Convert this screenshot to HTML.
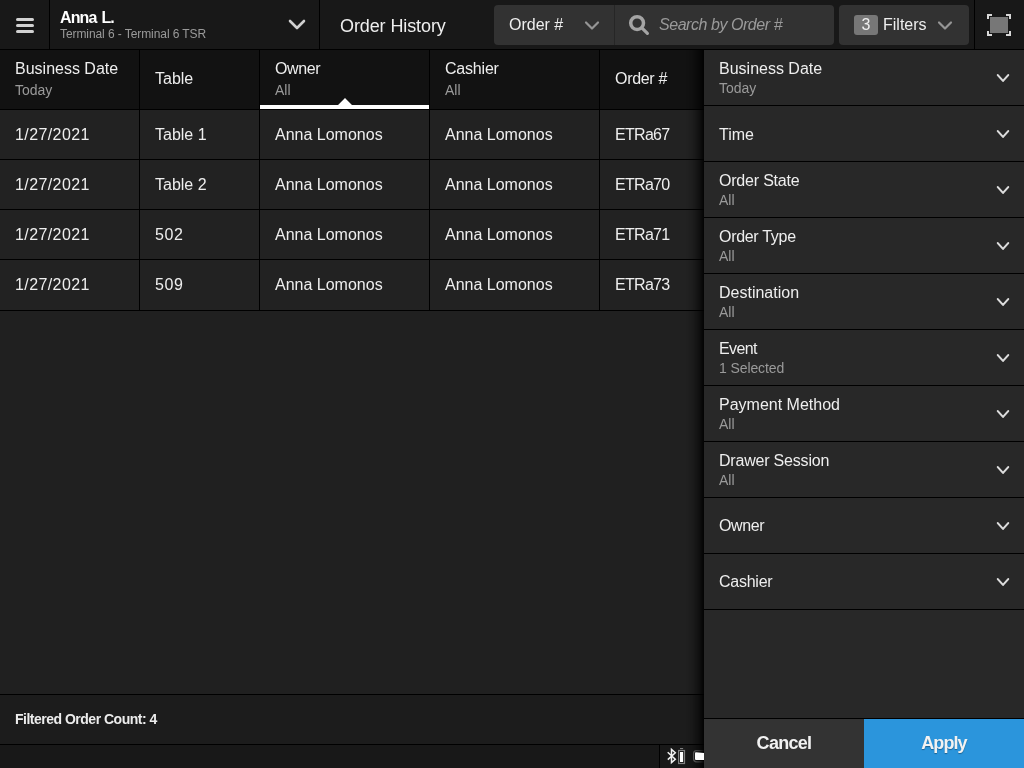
<!DOCTYPE html>
<html><head><meta charset="utf-8">
<style>
*{box-sizing:border-box;margin:0;padding:0}
html,body{width:1024px;height:768px;overflow:hidden;background:#202020}
body{position:relative;font-family:"Liberation Sans",sans-serif;color:#eeeeee}
.a{position:absolute}
.t{position:absolute;white-space:nowrap;line-height:20px;will-change:transform}
.f16{font-size:16px}
.f14{font-size:14px}
.sub{color:#9a9a9a}
/* top bar */
#top{left:0;top:0;width:1024px;height:50px;background:#181818;border-bottom:1px solid #000}
.vl{position:absolute;width:1px;background:#000}
.hl{position:absolute;height:1px;background:#000}
#hdr{left:0;top:50px;width:704px;height:60px;background:#121212}
.row{position:absolute;left:0;width:704px;height:50px;background:#222222}
#empty{left:0;top:311px;width:704px;height:384px;background:#202020}
#footer{left:0;top:695px;width:704px;height:50px;background:#1c1c1c}
#status{left:0;top:745px;width:704px;height:23px;background:#181818}
#panel{left:704px;top:50px;width:320px;height:718px;background:#282828}
#shadow{left:686px;top:50px;width:18px;height:718px;background:linear-gradient(to right,rgba(0,0,0,0) 0%,rgba(0,0,0,.12) 35%,rgba(0,0,0,.45) 70%,rgba(0,0,0,.92) 100%)}
.item{position:absolute;left:0;width:320px;height:56px;border-bottom:1px solid #111}
</style></head><body>

<!-- TOP BAR -->
<div id="top" class="a"></div>
<div class="vl" style="left:49px;top:0;height:49px"></div>
<div class="vl" style="left:319px;top:0;height:49px"></div>
<div class="vl" style="left:974px;top:0;height:49px"></div>
<!-- hamburger -->
<svg class="a" style="left:15px;top:17px" width="20" height="16" viewBox="0 0 20 16">
<g stroke="#d2d2d2" stroke-width="3" stroke-linecap="round"><line x1="2.5" y1="2.5" x2="17.5" y2="2.5"/><line x1="2.5" y1="8.5" x2="17.5" y2="8.5"/><line x1="2.5" y1="14.5" x2="17.5" y2="14.5"/></g></svg>
<div class="t" style="left:60px;top:8px;font-size:16px;font-weight:700;color:#fff;letter-spacing:-0.9px;word-spacing:1.5px">Anna L.</div>
<div class="t" style="left:60px;top:24px;font-size:12px;color:#9a9a9a;letter-spacing:-0.08px">Terminal 6 - Terminal 6 TSR</div>
<svg class="a" style="left:288px;top:18px" width="18" height="14" viewBox="0 0 18 14"><polyline points="2,3 9,10 16,3" fill="none" stroke="#d0d0d0" stroke-width="2.6" stroke-linecap="round" stroke-linejoin="round"/></svg>
<div class="t" style="left:340px;top:16px;font-size:18px;color:#eee;letter-spacing:-0.1px">Order History</div>
<!-- search group -->
<div class="a" style="left:494px;top:5px;width:340px;height:40px;background:#323232;border-radius:4px"></div>
<div class="vl" style="left:614px;top:5px;height:40px;background:#262626"></div>
<div class="t f16" style="left:509px;top:14.5px;color:#eee">Order #</div>
<svg class="a" style="left:584px;top:19.5px" width="16" height="12" viewBox="0 0 16 12"><polyline points="2,2.5 8,8.5 14,2.5" fill="none" stroke="#959595" stroke-width="2.2" stroke-linecap="round" stroke-linejoin="round"/></svg>
<svg class="a" style="left:627px;top:13px" width="24" height="24" viewBox="0 0 24 24"><circle cx="10.1" cy="10.1" r="6.4" fill="none" stroke="#a4a4a4" stroke-width="3.5"/><line x1="14.8" y1="14.8" x2="20.4" y2="20.4" stroke="#a4a4a4" stroke-width="3.2" stroke-linecap="round"/></svg>
<div class="t f16" style="left:659px;top:15px;color:#9a9a9a;font-style:italic;letter-spacing:-0.45px">Search by Order #</div>
<!-- filters btn -->
<div class="a" style="left:839px;top:5px;width:130px;height:40px;background:#323232;border-radius:4px"></div>
<div class="a" style="left:854px;top:15px;width:24px;height:20px;background:#777;border-radius:3px"></div>
<div class="t f16" style="left:857px;top:15px;width:18px;text-align:center;color:#eee">3</div>
<div class="t f16" style="left:883px;top:14.5px;color:#eee">Filters</div>
<svg class="a" style="left:937px;top:19.5px" width="16" height="12" viewBox="0 0 16 12"><polyline points="2,2.5 8,8.5 14,2.5" fill="none" stroke="#959595" stroke-width="2.2" stroke-linecap="round" stroke-linejoin="round"/></svg>
<!-- fullscreen icon -->
<svg class="a" style="left:987px;top:14px" width="24" height="22" viewBox="0 0 24 22">
<rect x="3" y="3" width="18" height="16" fill="#777"/>
<g fill="#d8d8d8"><path d="M0,0H5V2H2V5H0Z"/><path d="M24,0H19V2H22V5H24Z"/><path d="M0,22H5V20H2V17H0Z"/><path d="M24,22H19V20H22V17H24Z"/></g></svg>

<!-- TABLE HEADER -->
<div id="hdr" class="a"></div>
<div class="hl" style="left:0;top:109px;width:704px"></div>
<div class="vl" style="left:139px;top:50px;height:261px"></div>
<div class="vl" style="left:259px;top:50px;height:261px"></div>
<div class="vl" style="left:429px;top:50px;height:261px"></div>
<div class="vl" style="left:599px;top:50px;height:261px"></div>
<div class="t f16" style="left:15px;top:59px">Business Date</div>
<div class="t f14 sub" style="left:15px;top:80px">Today</div>
<div class="t f16" style="left:155px;top:69px">Table</div>
<div class="t f16" style="left:275px;top:59px;letter-spacing:-0.4px">Owner</div>
<div class="t f14 sub" style="left:275px;top:80px">All</div>
<div class="t f16" style="left:445px;top:59px;letter-spacing:-0.2px">Cashier</div>
<div class="t f14 sub" style="left:445px;top:80px">All</div>
<div class="t f16" style="left:615px;top:69px;letter-spacing:-0.3px">Order #</div>
<svg class="a" style="left:260px;top:97px" width="169" height="12" viewBox="0 0 169 12"><path d="M0,8 L78,8 L85,1 L92,8 L169,8 L169,12 L0,12 Z" fill="#fff"/></svg>

<!-- ROWS -->
<div class="row" style="top:110px"></div>
<div class="row" style="top:160px"></div>
<div class="row" style="top:210px"></div>
<div class="row" style="top:260px"></div>
<div class="hl" style="left:0;top:159px;width:704px"></div>
<div class="hl" style="left:0;top:209px;width:704px"></div>
<div class="hl" style="left:0;top:259px;width:704px"></div>
<div class="hl" style="left:0;top:310px;width:704px"></div>
<div class="vl" style="left:139px;top:110px;height:200px"></div>
<div class="vl" style="left:259px;top:110px;height:200px"></div>
<div class="vl" style="left:429px;top:110px;height:200px"></div>
<div class="vl" style="left:599px;top:110px;height:200px"></div>

<div class="t f16" style="left:15px;top:125px;letter-spacing:0.4px">1/27/2021</div>
<div class="t f16" style="left:155px;top:125px">Table 1</div>
<div class="t f16" style="left:275px;top:125px">Anna Lomonos</div>
<div class="t f16" style="left:445px;top:125px">Anna Lomonos</div>
<div class="t f16" style="left:615px;top:125px;letter-spacing:-0.7px">ETRa67</div>

<div class="t f16" style="left:15px;top:175px;letter-spacing:0.4px">1/27/2021</div>
<div class="t f16" style="left:155px;top:175px">Table 2</div>
<div class="t f16" style="left:275px;top:175px">Anna Lomonos</div>
<div class="t f16" style="left:445px;top:175px">Anna Lomonos</div>
<div class="t f16" style="left:615px;top:175px;letter-spacing:-0.7px">ETRa70</div>

<div class="t f16" style="left:15px;top:225px;letter-spacing:0.4px">1/27/2021</div>
<div class="t f16" style="left:155px;top:225px;letter-spacing:0.6px">502</div>
<div class="t f16" style="left:275px;top:225px">Anna Lomonos</div>
<div class="t f16" style="left:445px;top:225px">Anna Lomonos</div>
<div class="t f16" style="left:615px;top:225px;letter-spacing:-0.7px">ETRa71</div>

<div class="t f16" style="left:15px;top:275px;letter-spacing:0.4px">1/27/2021</div>
<div class="t f16" style="left:155px;top:275px;letter-spacing:0.6px">509</div>
<div class="t f16" style="left:275px;top:275px">Anna Lomonos</div>
<div class="t f16" style="left:445px;top:275px">Anna Lomonos</div>
<div class="t f16" style="left:615px;top:275px;letter-spacing:-0.7px">ETRa73</div>

<div id="empty" class="a"></div>
<div class="hl" style="left:0;top:694px;width:704px"></div>
<div id="footer" class="a"></div>
<div class="t" style="left:15px;top:709px;font-size:14px;font-weight:700;color:#ececec;letter-spacing:-0.5px">Filtered Order Count: 4</div>
<div class="hl" style="left:0;top:744px;width:704px"></div>
<div id="status" class="a"></div>
<div class="vl" style="left:659px;top:745px;height:23px"></div>


<!-- PANEL -->
<svg class="a" style="left:690px;top:748px" width="14" height="16" viewBox="690 748 14 16"><rect x="693.6" y="750.6" width="22" height="11.2" rx="3" fill="none" stroke="#6a6a6a" stroke-width="1.3"/></svg>
<div id="shadow" class="a"></div>
<svg class="a" style="left:660px;top:745px" width="44" height="23" viewBox="660 745 44 23">
<polyline points="667.7,752.3 675.3,759.2 671.5,762.6 671.5,749.4 675.3,752.8 667.8,759.6" fill="none" stroke="#f2f2f2" stroke-width="1.5" stroke-linejoin="miter" stroke-miterlimit="3"/>
<rect x="678.6" y="750.5" width="5.9" height="13" fill="none" stroke="#808080" stroke-width="1.2"/>
<rect x="680" y="752" width="3.1" height="10" fill="#fff"/>
<rect x="680" y="748" width="3.1" height="1.1" fill="#808080"/>
<path d="M695,753.2 Q695,752.3 696,752.3 L704,753 L704,759.9 L696,759.9 Q695,759.9 695,758.9 Z" fill="#fff"/>
</svg>
<div id="panel" class="a"></div>
<div class="hl" style="left:704px;top:105px;width:320px"></div>
<div class="t f16" style="left:719px;top:59px">Business Date</div>
<div class="t f14 sub" style="left:719px;top:78px">Today</div>
<svg class="a" style="left:995px;top:72px" width="16" height="14" viewBox="0 0 16 14"><polyline points="2.8,3.1 8,8.9 13.2,3.1" fill="none" stroke="#dcdcdc" stroke-width="2.1" stroke-linecap="round" stroke-linejoin="round"/></svg>
<div class="hl" style="left:704px;top:161px;width:320px"></div>
<div class="t f16" style="left:719px;top:125px">Time</div>
<svg class="a" style="left:995px;top:128px" width="16" height="14" viewBox="0 0 16 14"><polyline points="2.8,3.1 8,8.9 13.2,3.1" fill="none" stroke="#dcdcdc" stroke-width="2.1" stroke-linecap="round" stroke-linejoin="round"/></svg>
<div class="hl" style="left:704px;top:217px;width:320px"></div>
<div class="t f16" style="left:719px;top:171px;letter-spacing:-0.2px">Order State</div>
<div class="t f14 sub" style="left:719px;top:190px">All</div>
<svg class="a" style="left:995px;top:184px" width="16" height="14" viewBox="0 0 16 14"><polyline points="2.8,3.1 8,8.9 13.2,3.1" fill="none" stroke="#dcdcdc" stroke-width="2.1" stroke-linecap="round" stroke-linejoin="round"/></svg>
<div class="hl" style="left:704px;top:273px;width:320px"></div>
<div class="t f16" style="left:719px;top:227px;letter-spacing:-0.3px">Order Type</div>
<div class="t f14 sub" style="left:719px;top:246px">All</div>
<svg class="a" style="left:995px;top:240px" width="16" height="14" viewBox="0 0 16 14"><polyline points="2.8,3.1 8,8.9 13.2,3.1" fill="none" stroke="#dcdcdc" stroke-width="2.1" stroke-linecap="round" stroke-linejoin="round"/></svg>
<div class="hl" style="left:704px;top:329px;width:320px"></div>
<div class="t f16" style="left:719px;top:283px">Destination</div>
<div class="t f14 sub" style="left:719px;top:302px">All</div>
<svg class="a" style="left:995px;top:296px" width="16" height="14" viewBox="0 0 16 14"><polyline points="2.8,3.1 8,8.9 13.2,3.1" fill="none" stroke="#dcdcdc" stroke-width="2.1" stroke-linecap="round" stroke-linejoin="round"/></svg>
<div class="hl" style="left:704px;top:385px;width:320px"></div>
<div class="t f16" style="left:719px;top:339px;letter-spacing:-0.6px">Event</div>
<div class="t f14 sub" style="left:719px;top:358px;letter-spacing:-0.1px">1 Selected</div>
<svg class="a" style="left:995px;top:352px" width="16" height="14" viewBox="0 0 16 14"><polyline points="2.8,3.1 8,8.9 13.2,3.1" fill="none" stroke="#dcdcdc" stroke-width="2.1" stroke-linecap="round" stroke-linejoin="round"/></svg>
<div class="hl" style="left:704px;top:441px;width:320px"></div>
<div class="t f16" style="left:719px;top:395px">Payment Method</div>
<div class="t f14 sub" style="left:719px;top:414px">All</div>
<svg class="a" style="left:995px;top:408px" width="16" height="14" viewBox="0 0 16 14"><polyline points="2.8,3.1 8,8.9 13.2,3.1" fill="none" stroke="#dcdcdc" stroke-width="2.1" stroke-linecap="round" stroke-linejoin="round"/></svg>
<div class="hl" style="left:704px;top:497px;width:320px"></div>
<div class="t f16" style="left:719px;top:451px;letter-spacing:-0.2px">Drawer Session</div>
<div class="t f14 sub" style="left:719px;top:470px">All</div>
<svg class="a" style="left:995px;top:464px" width="16" height="14" viewBox="0 0 16 14"><polyline points="2.8,3.1 8,8.9 13.2,3.1" fill="none" stroke="#dcdcdc" stroke-width="2.1" stroke-linecap="round" stroke-linejoin="round"/></svg>
<div class="hl" style="left:704px;top:553px;width:320px"></div>
<div class="t f16" style="left:719px;top:516px;letter-spacing:-0.4px">Owner</div>
<svg class="a" style="left:995px;top:520px" width="16" height="14" viewBox="0 0 16 14"><polyline points="2.8,3.1 8,8.9 13.2,3.1" fill="none" stroke="#dcdcdc" stroke-width="2.1" stroke-linecap="round" stroke-linejoin="round"/></svg>
<div class="hl" style="left:704px;top:609px;width:320px"></div>
<div class="t f16" style="left:719px;top:572px;letter-spacing:-0.25px">Cashier</div>
<svg class="a" style="left:995px;top:576px" width="16" height="14" viewBox="0 0 16 14"><polyline points="2.8,3.1 8,8.9 13.2,3.1" fill="none" stroke="#dcdcdc" stroke-width="2.1" stroke-linecap="round" stroke-linejoin="round"/></svg>
<div class="hl" style="left:704px;top:718px;width:320px"></div>
<div class="a" style="left:704px;top:719px;width:160px;height:49px;background:#333"></div>
<div class="a" style="left:864px;top:719px;width:160px;height:49px;background:#2b95dc"></div>
<div class="t" style="left:704px;top:733px;width:160px;text-align:center;font-size:18px;font-weight:700;color:#f2f2f2;letter-spacing:-0.7px">Cancel</div>
<div class="t" style="left:864px;top:733px;width:160px;text-align:center;font-size:18px;font-weight:700;color:#f2f2f2;letter-spacing:-0.9px;text-shadow:0 1px 1px rgba(0,0,0,.35)">Apply</div>
</body></html>
